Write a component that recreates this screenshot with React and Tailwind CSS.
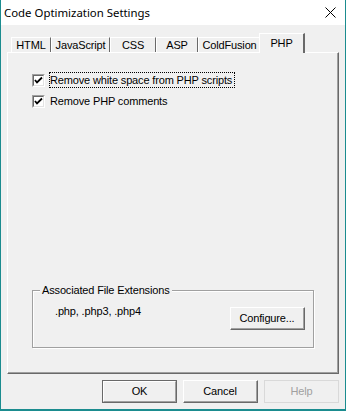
import React from "react";

const F = "font-['Liberation_Sans',Arial,sans-serif] text-[11px] leading-[13px] tracking-[-0.15px] text-black";

function Check() {
  return (
    <div className="w-[13px] h-[13px] border-t border-l border-[#a0a0a0] border-b border-r border-b-white border-r-white shrink-0">
      <div className="w-full h-full border-t border-l border-[#696969] border-b border-r border-b-[#e3e3e3] border-r-[#e3e3e3] bg-white flex items-center justify-center">
        <svg width="9" height="9" viewBox="0 0 9 9">
          <polyline points="1,4 3,6.5 8,1.5" fill="none" stroke="black" strokeWidth="1.8" />
        </svg>
      </div>
    </div>
  );
}

function Tab({ label, w, selected }) {
  if (selected) {
    return (
      <div
        className={`relative z-10 -ml-[2px] h-[20px] -mb-px bg-[#f0f0f0] border-t border-l border-white border-r-2 border-r-[#696969] flex items-start justify-center pt-[3px] ${F}`}
        style={{ width: w }}
      >
        {label}
      </div>
    );
  }
  return (
    <div
      className={`h-[15px] border-t border-l border-white border-r border-r-[#696969] flex items-start justify-center pt-[1px] ${F}`}
      style={{ width: w }}
    >
      {label}
    </div>
  );
}

function RaisedButton({ children, w = 75, def = false, disabled = false }) {
  if (def) {
    return (
      <div className="h-[23px] border border-[#696969] bg-[#f0f0f0]" style={{ width: w }}>
        <div className="w-full h-full border-t border-l border-white border-b border-r border-b-[#a0a0a0] border-r-[#a0a0a0]">
          <div className={`w-full h-full flex items-center justify-center ${F}`}>{children}</div>
        </div>
      </div>
    );
  }
  if (disabled) {
    return (
      <div className="h-[23px] border border-[#d9d9d9] bg-[#f0f0f0]" style={{ width: w }}>
        <div className={`w-full h-full flex items-center justify-center ${F} !text-[#a0a0a0]`}>{children}</div>
      </div>
    );
  }
  return (
    <div className="h-[23px] border-t border-l border-white border-b border-r border-b-[#696969] border-r-[#696969] bg-[#f0f0f0]" style={{ width: w }}>
      <div className="w-full h-full border-b border-r border-b-[#a0a0a0] border-r-[#a0a0a0]">
        <div className={`w-full h-full flex items-center justify-center ${F}`}>{children}</div>
      </div>
    </div>
  );
}

export default function App() {
  return (
    <div className="w-[346px] h-[411px] bg-[#f0f0f0] border-l border-r border-b-2 border-[#1b8c8f] flex flex-col overflow-hidden">
      {/* Title bar */}
      <div className="h-[25px] bg-white flex items-center justify-between shrink-0">
        <span className="pl-[3px] font-['Noto_Sans',Arial,sans-serif] text-[11.4px] text-black leading-none">
          Code Optimization Settings
        </span>
        <svg width="11" height="11" viewBox="0 0 11 11" className="mr-[9px]">
          <path d="M0.5 0.5 L10.5 10.5 M10.5 0.5 L0.5 10.5" stroke="black" strokeWidth="1" />
        </svg>
      </div>

      {/* Tabs */}
      <div className="h-[27px] flex items-end pl-[10px] shrink-0">
        <Tab label="HTML" w={40} />
        <Tab label="JavaScript" w={59} />
        <Tab label="CSS" w={46} />
        <Tab label="ASP" w={42} />
        <Tab label="ColdFusion" w={63} />
        <Tab label="PHP" w={46} selected />
      </div>

      {/* Panel */}
      <div className="mx-[6px] h-[322px] border-t border-l border-white border-r border-b border-r-[#696969] border-b-[#696969] shrink-0">
        <div className="w-full h-full border-r border-b border-r-[#a0a0a0] border-b-[#a0a0a0] flex flex-col">
          <div className="mt-[19px] ml-[24px] flex items-center gap-[4px]">
            <Check />
            <span className={`border border-dotted border-black pr-[2px] h-[16px] flex items-center ${F}`}>
              Remove white space from PHP scripts
            </span>
          </div>
          <div className="mt-[5px] ml-[24px] flex items-center gap-[4px]">
            <Check />
            <span className={`border border-transparent h-[16px] flex items-center ${F}`}>
              Remove PHP comments
            </span>
          </div>

          {/* Group box */}
          <div className="mt-[181px] ml-[24px] w-[282px] h-[58px] relative border border-[#a0a0a0] shadow-[1px_1px_0_white,inset_1px_1px_0_white]">
            <span className={`absolute -top-[7px] left-[7px] px-[2px] bg-[#f0f0f0] ${F}`}>
              Associated File Extensions
            </span>
            <div className="flex items-start justify-between pt-[16px] pl-[22px] pr-[8px]">
              <span className={`-mt-[2px] ${F}`}>.php, .php3, .php4</span>
              <RaisedButton>Configure...</RaisedButton>
            </div>
          </div>
        </div>
      </div>

      {/* Buttons */}
      <div className="mt-[6px] flex justify-end gap-[6px] pr-[6px] shrink-0">
        <RaisedButton def>OK</RaisedButton>
        <RaisedButton>Cancel</RaisedButton>
        <RaisedButton disabled>Help</RaisedButton>
      </div>
    </div>
  );
}
